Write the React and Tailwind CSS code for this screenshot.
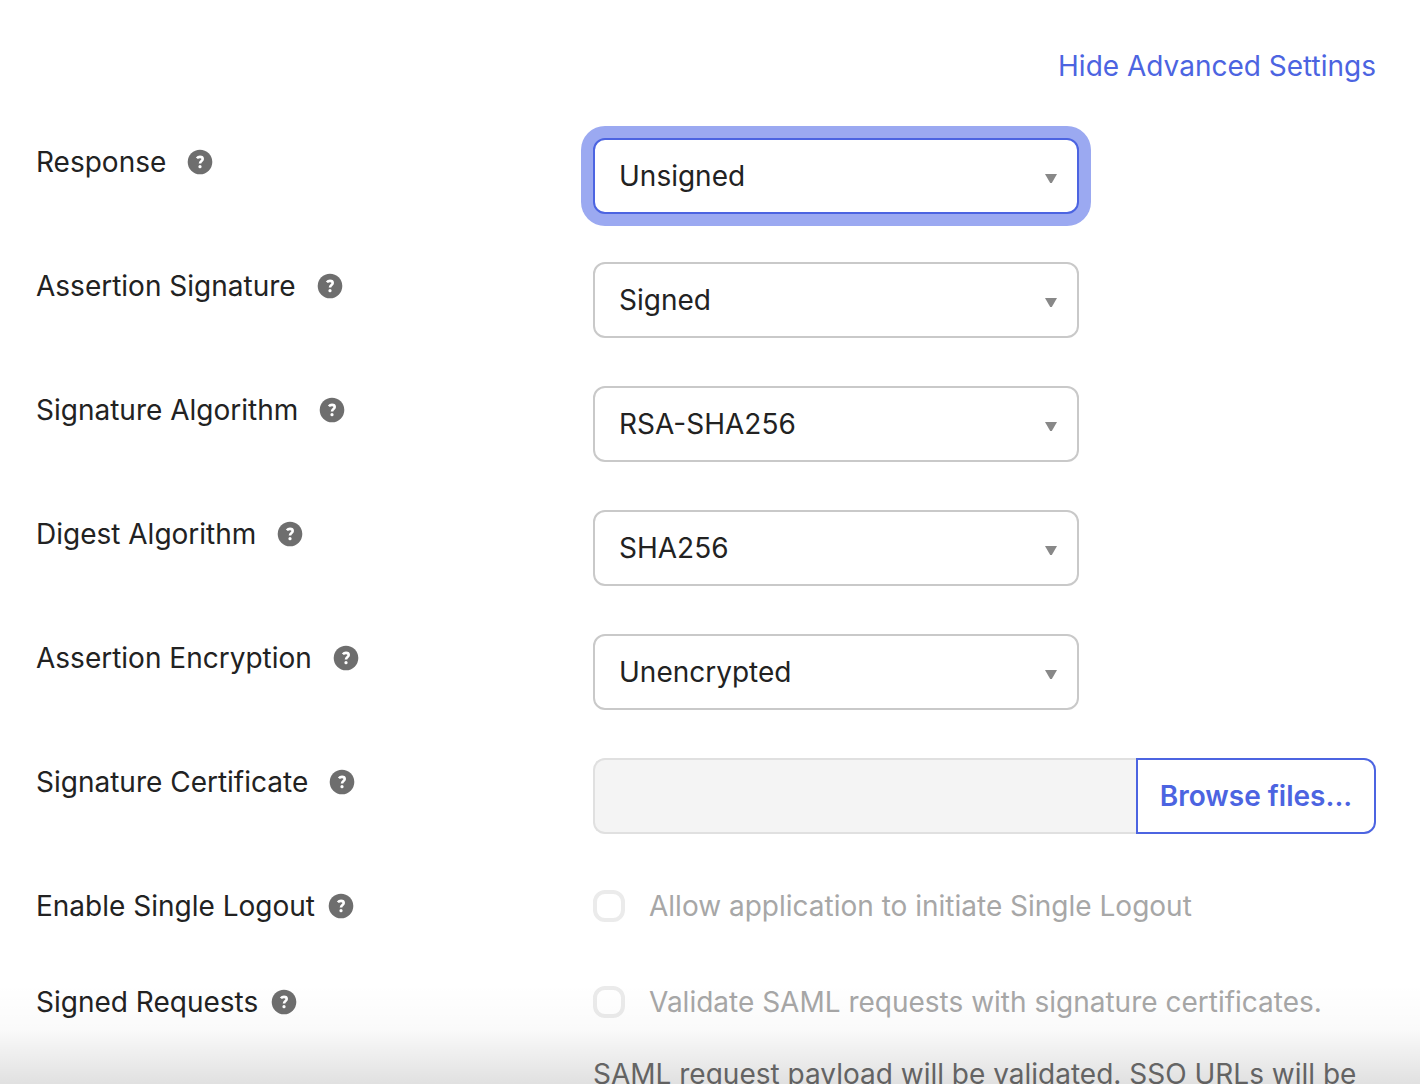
import { useState } from "react";

const selectFields = [
  { id: "response", label: "Response", value: "Unsigned", options: ["Signed", "Unsigned"] },
  { id: "assertionSignature", label: "Assertion Signature", value: "Signed", options: ["Signed", "Unsigned"] },
  { id: "signatureAlgorithm", label: "Signature Algorithm", value: "RSA-SHA256", options: ["RSA-SHA256", "RSA-SHA1"] },
  { id: "digestAlgorithm", label: "Digest Algorithm", value: "SHA256", options: ["SHA256", "SHA1"] },
  { id: "assertionEncryption", label: "Assertion Encryption", value: "Unencrypted", options: ["Unencrypted", "Encrypted"] },
];

function HelpIcon() {
  return (
    <svg viewBox="0 0 24 24" className="size-6 shrink-0 overflow-visible" aria-hidden="true">
      <circle cx="12" cy="12" r="12.3" fill="#6e6e6e" />
      <path
        d="M8.9 8.3C9.6 7.4 10.7 6.9 12 6.9c1.6 0 2.7.8 2.7 2.1 0 2-2.7 1.9-2.7 4.6"
        fill="none"
        stroke="#fff"
        strokeWidth="2.6"
      />
      <circle cx="12" cy="16.7" r="1.6" fill="#fff" />
    </svg>
  );
}

function FieldLabel({ htmlFor, children, tight }) {
  return (
    <div className={`flex items-center self-start ${tight ? "gap-3.5" : "gap-[22px] pt-1.5"}`}>
      <label htmlFor={htmlFor} className="leading-9">
        {children}
      </label>
      <HelpIcon />
    </div>
  );
}

export default function App() {
  const [values, setValues] = useState(
    Object.fromEntries(selectFields.map((field) => [field.id, field.value]))
  );

  return (
    <div className="relative h-screen overflow-hidden bg-white font-['Inter',sans-serif] text-[28px] text-[#222]">
      <form className="pt-12 pr-11 pl-9">
        <div className="flex justify-end">
          <a href="#advanced" className="leading-9 text-[#4c64e1]">
            Hide Advanced Settings
          </a>
        </div>

        <div className="mt-[54px] flex flex-col gap-12">
          {selectFields.map((field) => (
            <div key={field.id} className="grid grid-cols-[557px_1fr]">
              <FieldLabel htmlFor={field.id}>{field.label}</FieldLabel>
              <div className="relative w-[486px] max-w-full">
                <select
                  id={field.id}
                  value={values[field.id]}
                  onChange={(e) => setValues({ ...values, [field.id]: e.target.value })}
                  className={`h-19 w-full appearance-none rounded-xl border-2 bg-white px-6 outline-none ${
                    field.id === "response"
                      ? "border-[#4c64e1] ring-12 ring-[#9ba9f1]"
                      : "border-[#c9c9c9]"
                  }`}
                >
                  {field.options.map((option) => (
                    <option key={option}>{option}</option>
                  ))}
                </select>
                <svg
                  viewBox="0 0 12 9"
                  className="pointer-events-none absolute top-9 right-[22px] h-[9px] w-3"
                  aria-hidden="true"
                >
                  <path d="M0 0h12L6.8 9H5.2z" fill="#888" />
                </svg>
              </div>
            </div>
          ))}

          <div className="grid grid-cols-[557px_1fr]">
            <FieldLabel htmlFor="certificate">Signature Certificate</FieldLabel>
            <div className="flex h-19">
              <input
                id="certificate"
                type="text"
                readOnly
                className="min-w-0 flex-1 rounded-l-xl border-2 border-r-0 border-[#e0e0e0] bg-[#f4f4f4] px-6 outline-none"
              />
              <button
                type="button"
                className="w-60 rounded-r-xl border-2 border-[#4c64e1] bg-white font-semibold text-[#4c64e1]"
              >
                Browse files...
              </button>
            </div>
          </div>
        </div>

        <div className="mt-[54px] grid grid-cols-[557px_1fr]">
          <FieldLabel htmlFor="singleLogout" tight>
            Enable Single Logout
          </FieldLabel>
          <div className="flex items-center gap-6">
            <input
              id="singleLogout"
              type="checkbox"
              disabled
              className="size-8 appearance-none rounded-xl border-4 border-[#ebebeb] bg-white"
            />
            <label htmlFor="singleLogout" className="leading-9 text-[#a7a7a7]">
              Allow application to initiate Single Logout
            </label>
          </div>
        </div>

        <div className="mt-15 grid grid-cols-[557px_1fr]">
          <FieldLabel htmlFor="signedRequests" tight>
            Signed Requests
          </FieldLabel>
          <div>
            <div className="flex items-center gap-6">
              <input
                id="signedRequests"
                type="checkbox"
                disabled
                className="size-8 appearance-none rounded-xl border-4 border-[#ebebeb] bg-white"
              />
              <label htmlFor="signedRequests" className="leading-9 text-[#a7a7a7]">
                Validate SAML requests with signature certificates.
              </label>
            </div>
            <p className="mt-9 leading-9 text-[#6e6e6e]">SAML request payload will be validated. SSO URLs will be</p>
          </div>
        </div>
      </form>

      {/* Fade at the bottom edge of the scroll area */}
      <div className="pointer-events-none absolute inset-x-0 bottom-0 h-25 bg-linear-to-t from-black/12 via-black/2 via-55% to-transparent" />
    </div>
  );
}
